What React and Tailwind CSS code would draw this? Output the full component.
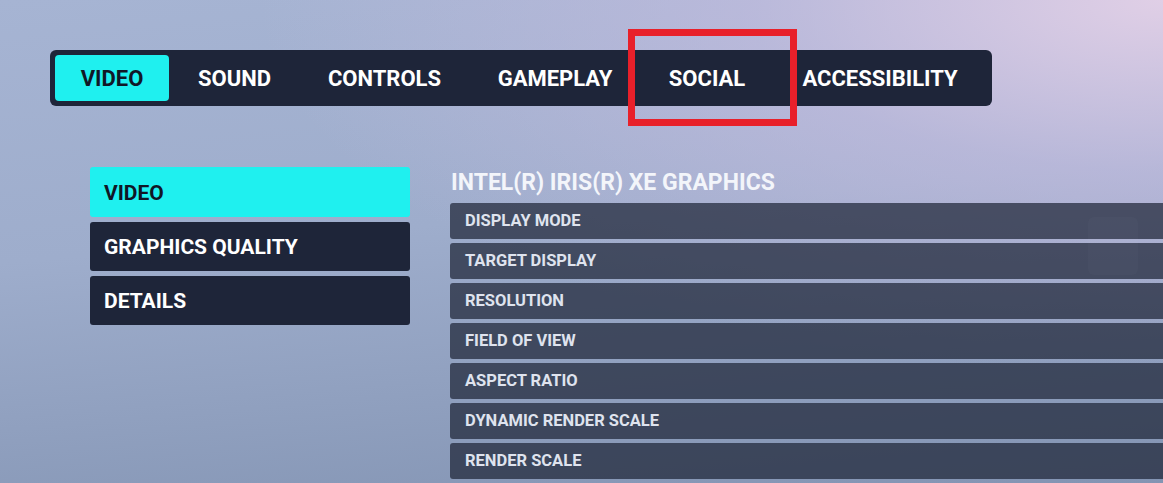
import React from 'react';

const TABS = [
  { label: 'VIDEO', w: 'w-[114px]', active: true },
  { label: 'SOUND', w: 'w-[131px]' },
  { label: 'CONTROLS', w: 'w-[169px]' },
  { label: 'GAMEPLAY', w: 'w-[172px]' },
  { label: 'SOCIAL', w: 'w-[132px]' },
  { label: 'ACCESSIBILITY', w: 'w-[214px]' }
];

const SECTIONS = [
  { label: 'VIDEO', active: true, h: 'h-[50px]' },
  { label: 'GRAPHICS QUALITY', h: 'h-[49px]' },
  { label: 'DETAILS', h: 'h-[49px]' }
];

const ROWS = [
  'DISPLAY MODE',
  'TARGET DISPLAY',
  'RESOLUTION',
  'FIELD OF VIEW',
  'ASPECT RATIO',
  'DYNAMIC RENDER SCALE',
  'RENDER SCALE'
];

export default function App() {
  return (
    <div
      className="relative w-[1163px] h-[483px] overflow-hidden bg-[radial-gradient(ellipse_at_100%_0%,#e0cfe6_0%,rgba(200,190,225,0.6)_25%,transparent_55%),linear-gradient(175deg,#a6b4d3_0%,#9eadcc_45%,#8394b3_100%)]"
      style={{ fontFamily: 'Roboto, "Liberation Sans", sans-serif' }}
    >
      <div className="pt-[50px] pl-[50px]">
        <nav className="flex w-[942px] h-[56px] p-[5px] rounded-md bg-[#1e2539]">
          {TABS.map((t) => (
            <div
              key={t.label}
              className={`${t.w} h-full flex items-center justify-center rounded-sm text-[22px] font-bold ${
                t.active ? 'bg-[#1ff0ef] text-[#111827]' : 'text-white'
              }`}
            >
              {t.label}
            </div>
          ))}
        </nav>
      </div>

      <div className="flex mt-[61px] pl-[90px] gap-[40px]">
        <aside className="w-[320px] flex flex-col gap-[5px]">
          {SECTIONS.map((s) => (
            <div
              key={s.label}
              className={`${s.h} flex items-center pl-[14px] pt-[3px] rounded-[3px] text-[21px] font-bold ${
                s.active ? 'bg-[#1ff0ef] text-[#101626]' : 'bg-[#1e2539] text-white'
              }`}
            >
              {s.label}
            </div>
          ))}
        </aside>

        <section className="flex-1 min-w-0">
          <h2 className="h-[36px] flex items-center pb-[6px] pl-px text-[23px] font-bold text-[#f3f5fa] leading-none">
            INTEL(R) IRIS(R) XE GRAPHICS
          </h2>
          <div className="flex flex-col gap-[4px] w-[760px]">
            {ROWS.map((r) => (
              <div
                key={r}
                className="h-[36px] flex items-center pl-[15px] rounded-l-[3px] bg-[#1f2538]/[0.72] text-[16.5px] font-bold text-[#dfe3ee]"
              >
                {r}
              </div>
            ))}
          </div>
        </section>
      </div>

      <div className="absolute left-[1088px] top-[217px] w-[50px] h-[58px] rounded-md bg-white/[0.02]" />

      <div className="absolute left-[628px] top-[29px] w-[169px] h-[97px] border-[7px] border-[#e8202a]" />
    </div>
  );
}
